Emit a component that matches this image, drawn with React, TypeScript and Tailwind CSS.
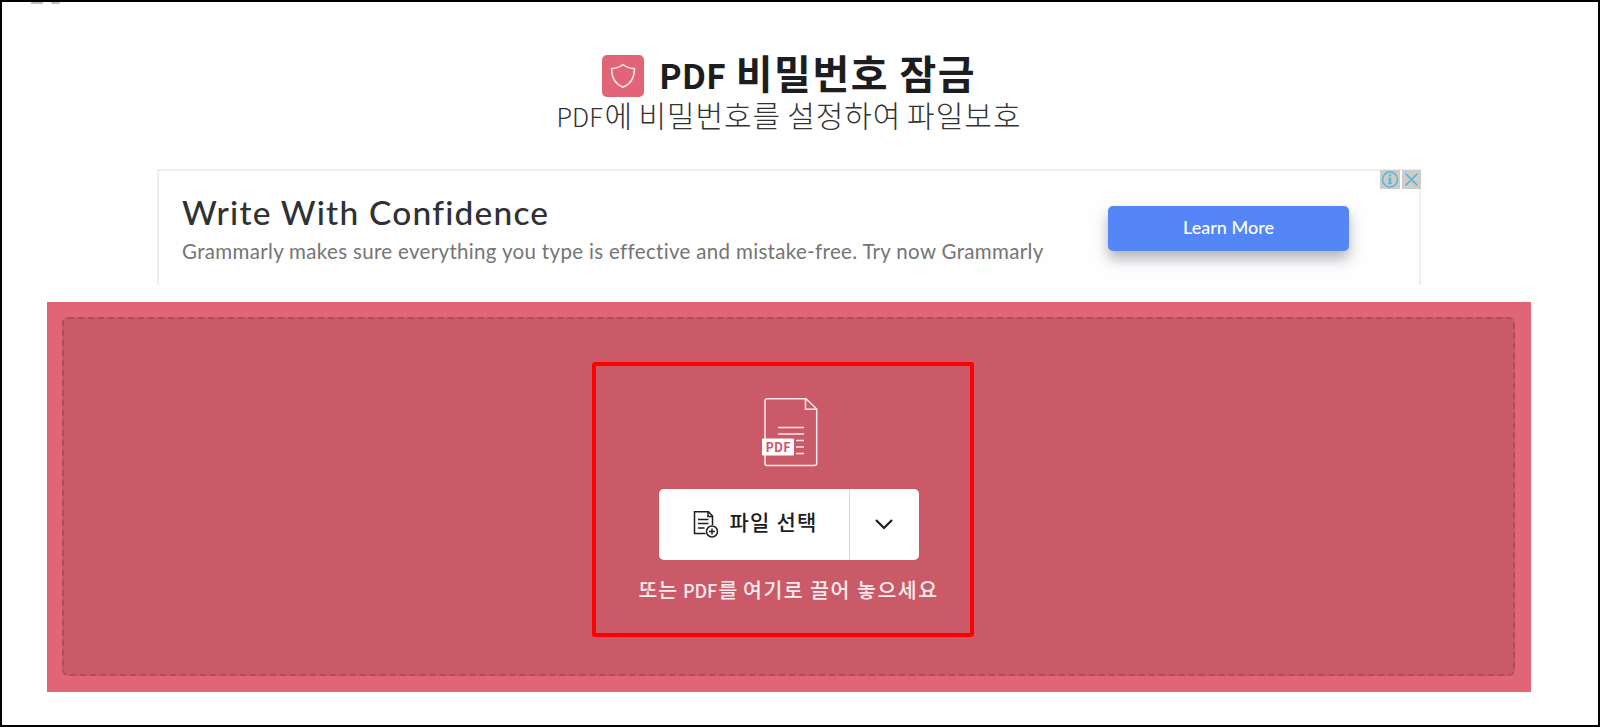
import React from 'react';

const Header: React.FC = () => {
  return (
    <header className="flex flex-col items-center h-[133px] pt-[48px]">
      <div className="flex items-center h-[46px] gap-[15px]">
        <div className="relative top-[3px] w-[42px] h-[42px] rounded-[5px] bg-[#e26577]">
          <svg className="w-[42px] h-[42px]" viewBox="0 0 42 42" fill="none" stroke="#fbe9eb" strokeWidth="1.5" strokeLinejoin="round">
            <path d="M21 9.5c-3.3 2.7-7.2 4-11.5 4.1.1 8.6 3.7 15.7 11.5 18.6 7.8-2.9 11.4-10 11.5-18.6-4.3-.1-8.2-1.4-11.5-4.1z" />
          </svg>
        </div>
        <h1 className="flex items-baseline w-[317px] text-[40px] leading-[46px] font-bold text-[#1d1d1f] whitespace-nowrap">
          <span className="text-[34px] w-[77px]">PDF</span>
          <span className="w-[164px] tracking-[1.5px]">비밀번호</span>
          <span className="tracking-[1.5px]">잠금</span>
        </h1>
      </div>
      <p className="flex items-baseline w-[465px] text-[30px] leading-[36px] font-light text-[#333] whitespace-nowrap">
        <span className="text-[25.5px] w-[48px]">PDF</span>
        <span className="w-[34px]">에</span>
        <span className="w-[149px] tracking-[0.9px]">비밀번호를</span>
        <span className="w-[120px] tracking-[0.9px]">설정하여</span>
        <span className="tracking-[1px]">파일보호</span>
      </p>
    </header>
  );
};

const AdBanner: React.FC = () => {
  return (
    <section className="relative flex justify-between ml-[110px] mt-[34px] w-[1264px] h-[116px] border-2 border-b-0 border-[#eeeeee] bg-[#fefefe] font-['Lato',sans-serif]">
      <div className="pl-[23px] pt-[20px] whitespace-nowrap">
        <h2 className="text-[33.5px] leading-[42px] tracking-[1.2px] font-medium text-[#303134]">Write With Confidence</h2>
        <p className="text-[20.5px] leading-[30px] mt-[3px] tracking-[0.33px] text-[#757575]">
          Grammarly makes sure everything you type is effective and mistake-free. Try now Grammarly
        </p>
      </div>
      <button className="mr-[70px] mt-[35px] pb-[2px] w-[241px] h-[45px] rounded-[5px] bg-[#5486f7] text-white text-[18px] font-medium shadow-[0_8px_14px_rgba(40,40,70,0.35)]">
        Learn More
      </button>
      <div className="absolute -top-px -right-[2px] flex gap-[2px]">
        <span className="w-[20px] h-[19px] bg-[#cccccc]">
          <svg className="w-[20px] h-[19px]" viewBox="0 0 19 19" fill="none" stroke="#5fb4cf" strokeWidth="1.5">
            <circle cx="9.5" cy="9.5" r="7.5" />
            <path d="M9.5 8v6" strokeWidth="2.5" />
            <path d="M7.5 8.2h2M7.5 13.7h4" strokeWidth="1" />
            <path d="M9.5 4.5v2" strokeWidth="2.5" />
          </svg>
        </span>
        <span className="w-[19px] h-[19px] bg-[#cccccc]">
          <svg className="w-[19px] h-[19px]" viewBox="0 0 19 19" fill="none" stroke="#5fb4cf" strokeWidth="1.7">
            <path d="M3.5 3.5l12 12M15.5 3.5l-12 12" />
          </svg>
        </span>
      </div>
    </section>
  );
};

const PdfIcon: React.FC = () => {
  return (
    <svg className="w-[56px] h-[70px] ml-[2px]" viewBox="0 0 56 70" fill="none" stroke="#fbe9eb" strokeWidth="1.5">
      <path d="M5 1.7h39L54.7 12v54.5a2 2 0 0 1-2 2H5a2 2 0 0 1-2-2V3.7a2 2 0 0 1 2-2z" />
      <path d="M43.5 1.7v10.5h11" />
      <path d="M16 30.5h26M16 37h26M34 43.5h8M34 50h8M34 56.5h8" />
      <rect x="0" y="41.5" width="32" height="17" rx="1" fill="white" stroke="none" />
      <text x="3.5" y="54.7" fontSize="12.5" fontWeight="700" textLength="25" fill="#cb5a69" stroke="none" className="font-['Noto_Sans_CJK_KR',sans-serif]">
        PDF
      </text>
    </svg>
  );
};

const FileButton: React.FC = () => {
  return (
    <div className="flex w-[260px] h-[71px] rounded-[5px] bg-white text-[#1d1d1f]">
      <button className="flex items-center w-[190px] pl-[34px] pb-[2px]">
        <svg className="w-[26px] h-[28px]" viewBox="0 0 26 28" fill="none" stroke="currentColor" strokeWidth="1.5">
          <path d="M12.5 23.5H1.5V1.8H15.5L19.5 6v9" />
          <path d="M15 2v4.5h4.5" />
          <path d="M5 9.5h10.5M5 13.5h10.5M5 18h6.5" />
          <circle cx="19" cy="21.5" r="5.5" />
          <path d="M19 18.5v6M16 21.5h6" />
        </svg>
        <span className="ml-[11px] mb-[5px] text-[21px] leading-[30px] tracking-[1.2px] font-medium whitespace-nowrap">파일 선택</span>
      </button>
      <button className="flex items-center justify-center flex-1 pb-[2px] pr-px border-l border-[#d8d8d8]">
        <svg className="w-[18px] h-[12px]" viewBox="0 0 18 12" fill="none" stroke="currentColor" strokeWidth="2.2">
          <path d="M1 2l8 8 8-8" />
        </svg>
      </button>
    </div>
  );
};

const App: React.FC = () => {
  return (
    <div className="relative w-[1600px] h-[727px] overflow-hidden border-2 border-black bg-white font-['Noto_Sans_CJK_KR',sans-serif]">
      <main className="ml-[45px] w-[1484px]">
        <Header />
        <AdBanner />
        <section className="mt-[17px] h-[390px] p-[16px] pt-[15px] pl-[15px] bg-[#e26577]">
          <div className="flex flex-col items-center h-[359px] rounded-[6px] border-2 border-dashed border-[#ad4d5a] bg-[#cb5a69] pt-[78px]">
            <PdfIcon />
            <div className="mt-[22px]">
              <FileButton />
            </div>
            <p className="flex items-baseline w-[300px] mt-[13px] text-[20.5px] leading-[32px] font-medium text-[#fbecee] whitespace-nowrap">
              <span className="w-[45px] tracking-[0.8px]">또는</span>
              <span className="w-[36px] text-[18px]">PDF</span>
              <span className="w-[25px]">를</span>
              <span className="tracking-[1.5px]">여기로 끌어 놓으세요</span>
            </p>
          </div>
        </section>
      </main>

      {/* Bottom edge of the scrolled-off line */}
      <div className="absolute left-[29px] top-0 flex items-end gap-[8px] h-[2px]">
        <span className="w-[12px] h-[2px] bg-[#bdbdbd]"></span>
        <span className="w-[9px] h-[2px] rounded-b-full bg-[#bdbdbd]"></span>
      </div>

      {/* Highlight frame */}
      <div className="absolute left-[590px] top-[360px] w-[382px] h-[275px] rounded-[3px] border-4 border-[#ff0000]"></div>
    </div>
  );
};

export default App;
